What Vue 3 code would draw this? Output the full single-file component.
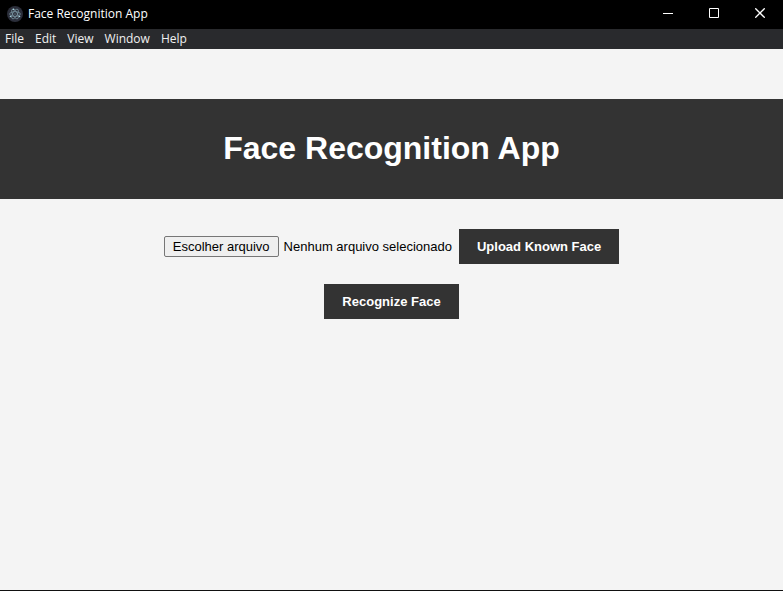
<script setup>
import { ref } from 'vue'

const menus = ['File', 'Edit', 'View', 'Window', 'Help']
const fileName = ref('Nenhum arquivo selecionado')

function onFileChange(event) {
  const file = event.target.files[0]
  fileName.value = file ? file.name : 'Nenhum arquivo selecionado'
}
</script>

<template>
  <div class="window">
    <div class="titlebar">
      <svg class="app-icon" viewBox="0 0 16 16" aria-hidden="true">
        <circle cx="8" cy="8" r="8" fill="#2b2e3a" />
        <g fill="none" stroke="#9fc6d2" stroke-width="0.6" opacity="0.85">
          <ellipse cx="8" cy="8" rx="5.4" ry="2.3" />
          <ellipse cx="8" cy="8" rx="5.4" ry="2.3" transform="rotate(60 8 8)" />
          <ellipse cx="8" cy="8" rx="5.4" ry="2.3" transform="rotate(120 8 8)" />
        </g>
        <g fill="#a9d3de">
          <circle cx="8" cy="8" r="0.5" />
          <circle cx="3.5" cy="10.5" r="0.8" />
          <circle cx="12.5" cy="10.5" r="0.8" />
          <circle cx="6.5" cy="3.4" r="0.8" />
        </g>
      </svg>
      <span class="title">Face Recognition App</span>
      <div class="controls">
        <button type="button" class="control" aria-label="Minimize">
          <svg viewBox="0 0 10 10"><path d="M0 5.5H10" /></svg>
        </button>
        <button type="button" class="control" aria-label="Maximize">
          <svg viewBox="0 0 10 10"><path d="M0.5 0.5H9.5V9.5H0.5Z" /></svg>
        </button>
        <button type="button" class="control" aria-label="Close">
          <svg viewBox="0 0 10 10"><path d="M0.3 0.3L9.7 9.7M9.7 0.3L0.3 9.7" stroke-width="1.3" /></svg>
        </button>
      </div>
    </div>
    <nav class="menubar">
      <button v-for="menu in menus" :key="menu" type="button" class="menu">{{ menu }}</button>
    </nav>
    <main class="page">
      <header class="banner">
        <h1>Face Recognition App</h1>
      </header>
      <form class="upload" @submit.prevent>
        <input id="face-file" class="file-input" type="file" @change="onFileChange" />
        <label class="picker" for="face-file">
          <span class="choose">Escolher arquivo</span>
          <span>{{ fileName }}</span>
        </label>
        <button type="submit" class="action">Upload Known Face</button>
      </form>
      <button type="button" class="action">Recognize Face</button>
    </main>
  </div>
</template>

<style>
body {
  margin: 0;
  background: #f4f4f4;
}
</style>

<style scoped>
.window {
  display: flex;
  flex-direction: column;
  box-sizing: border-box;
  min-height: 100vh;
  border-bottom: 1px solid #111;
  background: #f4f4f4;
  font-family: "Liberation Sans", Arial, sans-serif;
}
.titlebar {
  display: flex;
  align-items: center;
  height: 29px;
  padding-left: 7px;
  background: #000;
  color: #fff;
  font: 12px/16px "Open Sans", "Segoe UI", sans-serif;
}
.app-icon {
  width: 16px;
  height: 16px;
  margin: 0 5px 2px 0;
}
.title {
  padding-bottom: 1px;
}
.controls {
  display: flex;
  align-self: stretch;
  margin-left: auto;
}
.control {
  display: flex;
  align-items: center;
  justify-content: center;
  width: 46px;
  padding: 0 0 3px;
  border: 0;
  background: none;
}
.control svg {
  width: 10px;
  height: 10px;
  fill: none;
  stroke: #fff;
}
.menubar {
  display: flex;
  gap: 11px;
  height: 20px;
  padding-left: 5px;
  background: #292a2d;
}
.menu {
  padding: 0;
  border: 0;
  background: none;
  color: #f1f1f1;
  font: 12px/20px "Open Sans", "Segoe UI", sans-serif;
}
.page {
  display: flex;
  flex-direction: column;
  align-items: center;
  padding-top: 50px;
}
.banner {
  align-self: stretch;
  margin-bottom: 30px;
  padding: 29px 20px 31px;
  background: #333;
  color: #fff;
  text-align: center;
}
h1 {
  margin: 0;
  font-size: 32px;
  line-height: 40px;
}
.upload {
  display: flex;
  align-items: center;
  gap: 7px;
  margin-bottom: 20px;
}
.file-input {
  position: absolute;
  width: 1px;
  height: 1px;
  opacity: 0;
}
.picker {
  display: flex;
  align-items: center;
  gap: 5px;
  color: #000;
  font-size: 13px;
  line-height: 15px;
}
.choose {
  padding: 2px 8px;
  border: 1px solid #767676;
  border-radius: 2px;
  background: #efefef;
}
.action {
  padding: 10px 18px;
  border: 0;
  background: #333;
  color: #fff;
  font: bold 13px/15px "Liberation Sans", Arial, sans-serif;
  cursor: pointer;
}
</style>
